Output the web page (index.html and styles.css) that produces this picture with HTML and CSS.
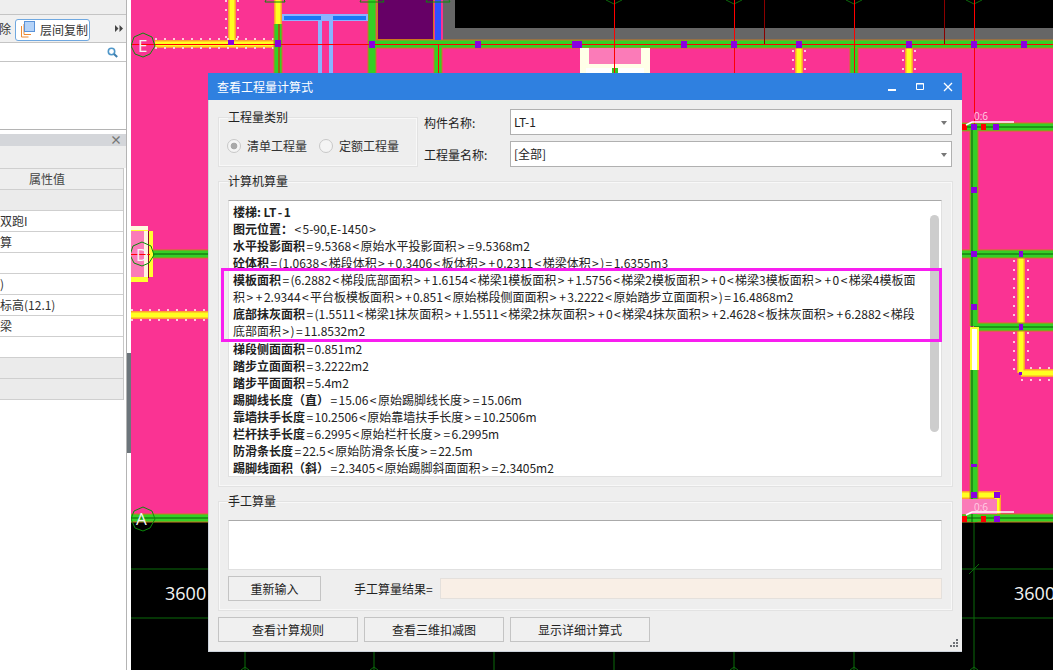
FILE: index.html
```html
<!DOCTYPE html>
<html lang="zh-CN">
<head>
    <meta charset="UTF-8">
    <meta name="viewport" content="width=device-width, initial-scale=1.0">
    <title>查看工程量计算式</title>
    <link rel="stylesheet" href="styles.css">
</head>
<body>
    <!-- 左侧面板 -->
    <aside class="side">
        <div class="side-top"></div>
        <div class="side-toolbar">
            <span class="tool-text">除</span>
            <span class="tool-btn">
                <svg class="tool-icon" width="15" height="17" viewBox="0 0 15 17">
                    <path d="M1.5 5v11h7M4 3v10.5h7" fill="none" stroke="#ee8a32" stroke-width="1"/>
                    <rect x="4.5" y="0.5" width="10" height="10" fill="#b5d3f8" stroke="#5b93d8"/>
                </svg>
                层间复制
            </span>
            <span class="tool-more">
                <svg width="8" height="7" viewBox="0 0 8 7"><path d="M0 0l3.5 3.5L0 7zM4.5 0L8 3.5 4.5 7z" fill="#444"/></svg>
            </span>
        </div>
        <div class="side-search">
            <svg width="11" height="11" viewBox="0 0 11 11">
                <circle cx="4.5" cy="4.5" r="3.2" fill="none" stroke="#4f97c9" stroke-width="1.6"/>
                <path d="M7 7l3.2 3" stroke="#3f7fae" stroke-width="2"/>
            </svg>
        </div>
        <div class="side-list"></div>
        <div class="panel-head"><span class="panel-close">×</span></div>
        <div class="panel-tools"></div>
        <div class="prop-table">
            <div class="prop-row prop-title">属性值</div>
            <div class="prop-row prop-gray"></div>
            <div class="prop-row">双跑I</div>
            <div class="prop-row">算</div>
            <div class="prop-row"></div>
            <div class="prop-row">)</div>
            <div class="prop-row">标高(12.1)</div>
            <div class="prop-row">梁</div>
            <div class="prop-row"></div>
            <div class="prop-row prop-gray"></div>
            <div class="prop-row prop-gray"></div>
        </div>
    </aside>

    <div class="splitter"><span class="splitter-handle"></span></div>

    <!-- 绘图区 -->
    <main class="canvas">
        <svg class="cad" width="922" height="670" viewBox="131 0 922 670">
            <rect x="131" y="0" width="922" height="670" fill="#fa3393"/>

            <!-- 顶部黑区 -->
            <rect x="443" y="0" width="610" height="40" fill="#666"/>
            <rect x="455" y="0" width="598" height="28" fill="#000"/>
            <rect x="377" y="0" width="57" height="40" fill="#c87a1a"/>
            <rect x="378" y="0" width="55" height="39" fill="#660066"/>

            <!-- 底部黑区 -->
            <rect x="131" y="522" width="922" height="148" fill="#000"/>
            <g class="axis-dark">
                <path d="M131 569H1053M131 618H1053"/>
                <path d="M245 522V670M374 522V670M494 522V670M614 522V670M734 522V670M854 522V670M974 522V670"/>
                <path d="M969 574l10-10"/>
                <path d="M241 670l4-3 4 3M370 670l4-3 4 3M730 670l4-3 4 3M850 670l4-3 4 3M970 670l4-3 4 3"/>
                <path d="M606 0l8 4 8-4M726 0l8 4 8-4M846 0l8 4 8-4M966 0l8 4 8-4"/>
            </g>

            <!-- 黄色梁 -->
            <g class="beam-y">
                <path d="M155 44H278"/><path d="M232 0V40"/><path d="M278 0V24"/>
                <path d="M799 48V73"/><path d="M909 48V73"/>
                <path d="M131 315H208"/>
                <path d="M1021 258V373"/><path d="M1021 373H1053"/>
                <path d="M962 495H1000"/><path d="M997 495V514"/>
            </g>
            <g class="beam-y-in">
                <path d="M155 44H278"/><path d="M232 0V40"/><path d="M278 0V24"/>
                <path d="M799 48V73"/><path d="M909 48V73"/>
                <path d="M131 315H208"/>
                <path d="M1021 258V373"/><path d="M1021 373H1053"/>
                <path d="M962 495H1000"/><path d="M997 495V514"/>
            </g>
            <g class="dots">
                <path d="M155 39H278M155 48H278M226 0V38M238 0V38"/>
                <path d="M793 50V73M805 50V73M903 50V73M915 50V73"/>
                <path d="M131 310H208M131 320H208"/>
                <path d="M1014 260V370M1028 260V368M1030 368H1053M1021 380H1053"/>
            </g>

            <!-- 绿色梁 -->
            <g class="beam-o">
                <path d="M370 44H1053"/><path d="M278 24V73"/><path d="M372 0V73"/><path d="M438 44V73"/>
                <path d="M854 48V73"/>
                <path d="M962 127H1053"/><path d="M974 127V326"/><path d="M974 370V522"/>
                <path d="M962 254H1053"/><path d="M974 327H1053"/>
                <path d="M150 254H208"/><path d="M131 518H1053"/>
            </g>
            <g class="beam-g">
                <path d="M370 44H1053"/><path d="M278 24V73"/><path d="M372 0V73"/><path d="M438 44V73"/>
                <path d="M854 48V73"/>
                <path d="M962 127H1053"/><path d="M974 127V326"/><path d="M974 370V522"/>
                <path d="M962 254H1053"/><path d="M974 327H1053"/>
                <path d="M150 254H208"/><path d="M131 518H1053"/>
            </g>
            <path d="M438 0V40" stroke="#2f50ff" stroke-width="6"/>
            <path d="M972 127V522M962 127H1053M962 254H1053M974 327H1053M150 254H208M131 518H1053" stroke="#0a5a0a" stroke-width="1"/>

            <!-- 白段 -->
            <rect x="970" y="327" width="9" height="43" fill="#ffff30"/>
            <rect x="972" y="329" width="5" height="41" fill="#fff"/>

            <!-- 蓝色T形 -->
            <rect x="282" y="14" width="86" height="7" fill="#8ab4ff"/>
            <rect x="284" y="16" width="82" height="4" fill="#1a78f5"/>
            <rect x="318" y="21" width="4" height="52" fill="#8ab4ff"/>
            <rect x="329" y="21" width="4" height="52" fill="#8ab4ff"/>
            <rect x="321" y="14" width="12" height="7" fill="#8ab4ff"/>

            <!-- 楼梯块 -->
            <rect x="580" y="48" width="70" height="25" fill="#ffffe8"/>
            <rect x="589" y="48" width="52" height="16" fill="#fb7bb8"/>
            <rect x="586" y="68" width="58" height="5" fill="#fff"/>
            <rect x="612" y="68" width="6" height="5" fill="#34c820"/>
            <rect x="131" y="226" width="17" height="56" fill="#ffff30"/>
            <rect x="131" y="226" width="17" height="4" fill="#fffbe0"/>
            <rect x="131" y="231" width="13" height="46" fill="#fb7bb8"/>
            <rect x="144" y="231" width="4" height="46" fill="#fff4e0"/>
            <rect x="148" y="231" width="1" height="47" fill="#8b0a2a"/>
            <rect x="149" y="231" width="4" height="46" fill="#ffff30"/>
            <rect x="962" y="499" width="35" height="15" fill="#fb7bb8"/>

            <!-- 红色轴线 -->
            <g class="axis-red">
                <path d="M131 44.5H1053"/>
                <path d="M614.5 0V73M734.5 0V73M854.5 0V73M974.5 0V127"/>
                <path d="M131 254.5H150M279 24V73M438.5 44V73"/>
            </g>
            <path d="M764.5 0V44M944.5 0V44" stroke="#8b0000" stroke-width="1"/>

            <!-- 柱点 -->
            <g class="node">
                <rect x="275" y="40" width="6" height="7"/><rect x="228" y="40" width="6" height="5"/>
                <rect x="369" y="41" width="6" height="7"/><rect x="475" y="41" width="6" height="7"/>
                <rect x="572" y="41" width="10" height="7"/><rect x="681" y="41" width="6" height="7"/>
                <rect x="731" y="41" width="6" height="7"/><rect x="796" y="41" width="6" height="7"/>
                <rect x="906" y="41" width="6" height="7"/><rect x="971" y="41" width="6" height="7"/>
                <rect x="1021" y="41" width="6" height="7"/>
                <rect x="971" y="124" width="6" height="6"/><rect x="993" y="124" width="6" height="6"/>
                <rect x="971" y="187" width="6" height="6"/><rect x="971" y="251" width="6" height="6"/>
                <rect x="1019" y="251" width="4" height="6"/><rect x="971" y="304" width="6" height="6"/>
                <rect x="1019" y="324" width="4" height="6"/><rect x="1019" y="372" width="3" height="3"/>
                <rect x="971" y="464" width="6" height="3"/>
                <rect x="971" y="492" width="6" height="6"/><rect x="994" y="492" width="6" height="6"/>
                <rect x="994" y="516" width="6" height="6"/>
            </g>
            <g class="node-red">
                <rect x="962" y="124" width="5" height="6"/><rect x="981" y="124" width="5" height="6"/>
                <rect x="962" y="516" width="5" height="6"/><rect x="981" y="516" width="5" height="6"/>
            </g>

            <!-- 轴号 -->
            <g class="bubble">
                <polygon points="143,33 152,37 155,46 150,54 143,57 135,54 131,46 134,37"/>
                <polygon points="142,242 151,246 154,255 149,263 142,266 134,263 130,255 133,246"/>
                <polygon points="143,507 152,511 155,519 150,528 143,531 135,528 131,519 134,511"/>
                <polygon points="274,-8 283,-4 285,2 265,2 268,-4"/>
                <polygon points="372,-8 381,-4 384,2 360,2 363,-4"/>
                <polygon points="438,-8 447,-4 450,2 426,2 429,-4"/>
            </g>
            <g class="cad-text">
                <text x="138" y="52" font-size="17">E</text>
                <text x="136" y="261" font-size="17">D</text>
                <text x="136" y="525" font-size="17">A</text>
                <text x="165" y="600" font-size="18">3600</text>
                <text x="1014" y="600" font-size="18">3600</text>
            </g>
            <g class="dim">
                <text x="974" y="120" font-size="10">0:6</text>
                <text x="974" y="511" font-size="10">0:6</text>
                <path d="M966 125l6-3H1014M966 515l6-3H1014"/>
            </g>
        </svg>
    </main>

    <!-- 对话框 -->
    <section class="dialog">
        <header class="dialog-title">
            <span>查看工程量计算式</span>
            <div class="win-btns">
                <svg width="10" height="10" viewBox="0 0 10 10"><rect x="1" y="7" width="8" height="2" fill="#fff"/></svg>
                <svg width="10" height="10" viewBox="0 0 10 10"><path d="M1.5 1.5h7v6h-7z M1 2h8" fill="none" stroke="#fff"/></svg>
                <svg width="10" height="10" viewBox="0 0 10 10"><path d="M1 1l8 8M9 1l-8 8" fill="none" stroke="#fff" stroke-width="1.3"/></svg>
            </div>
        </header>

        <div class="dialog-body">
            <div class="top-row">
                <fieldset class="group type-group">
                    <legend>工程量类别</legend>
                    <div class="radios">
                        <span class="radio checked">清单工程量</span>
                        <span class="radio">定额工程量</span>
                    </div>
                </fieldset>
                <div class="name-form">
                    <label>构件名称:</label>
                    <div class="select">LT-1</div>
                    <label>工程量名称:</label>
                    <div class="select">[全部]</div>
                </div>
            </div>

            <fieldset class="group calc-group">
                <legend>计算机算量</legend>
                <div class="calc-text">
                    <div class="line"><b>楼梯: LT<i>-</i>1</b></div>
                    <div class="line"><b>图元位置：</b><i>&lt;</i>5-90,E-1450<i>&gt;</i></div>
                    <div class="line"><b>水平投影面积</b><i>=</i>9.5368<i>&lt;</i>原始水平投影面积<i>&gt;</i><i>=</i>9.5368m2</div>
                    <div class="line"><b>砼体积</b><i>=</i>(1.0638<i>&lt;</i>梯段体积<i>&gt;</i><i>+</i>0.3406<i>&lt;</i>板体积<i>&gt;</i><i>+</i>0.2311<i>&lt;</i>梯梁体积<i>&gt;</i>)<i>=</i>1.6355m3</div>
                    <div class="line"><b>模板面积</b><i>=</i>(6.2882<i>&lt;</i>梯段底部面积<i>&gt;</i><i>+</i>1.6154<i>&lt;</i>梯梁1模板面积<i>&gt;</i><i>+</i>1.5756<i>&lt;</i>梯梁2模板面积<i>&gt;</i><i>+</i>0<i>&lt;</i>梯梁3模板面积<i>&gt;</i><i>+</i>0<i>&lt;</i>梯梁4模板面</div>
                    <div class="line">积<i>&gt;</i><i>+</i>2.9344<i>&lt;</i>平台板模板面积<i>&gt;</i><i>+</i>0.851<i>&lt;</i>原始梯段侧面面积<i>&gt;</i><i>+</i>3.2222<i>&lt;</i>原始踏步立面面积<i>&gt;</i>)<i>=</i>16.4868m2</div>
                    <div class="line"><b>底部抹灰面积</b><i>=</i>(1.5511<i>&lt;</i>梯梁1抹灰面积<i>&gt;</i><i>+</i>1.5511<i>&lt;</i>梯梁2抹灰面积<i>&gt;</i><i>+</i>0<i>&lt;</i>梯梁4抹灰面积<i>&gt;</i><i>+</i>2.4628<i>&lt;</i>板抹灰面积<i>&gt;</i><i>+</i>6.2882<i>&lt;</i>梯段</div>
                    <div class="line">底部面积<i>&gt;</i>)<i>=</i>11.8532m2</div>
                    <div class="line"><b>梯段侧面面积</b><i>=</i>0.851m2</div>
                    <div class="line"><b>踏步立面面积</b><i>=</i>3.2222m2</div>
                    <div class="line"><b>踏步平面面积</b><i>=</i>5.4m2</div>
                    <div class="line"><b>踢脚线长度（直）</b><i>=</i>15.06<i>&lt;</i>原始踢脚线长度<i>&gt;</i><i>=</i>15.06m</div>
                    <div class="line"><b>靠墙扶手长度</b><i>=</i>10.2506<i>&lt;</i>原始靠墙扶手长度<i>&gt;</i><i>=</i>10.2506m</div>
                    <div class="line"><b>栏杆扶手长度</b><i>=</i>6.2995<i>&lt;</i>原始栏杆长度<i>&gt;</i><i>=</i>6.2995m</div>
                    <div class="line"><b>防滑条长度</b><i>=</i>22.5<i>&lt;</i>原始防滑条长度<i>&gt;</i><i>=</i>22.5m</div>
                    <div class="line"><b>踢脚线面积（斜）</b><i>=</i>2.3405<i>&lt;</i>原始踢脚斜面面积<i>&gt;</i><i>=</i>2.3405m2</div>
                    <span class="scroll-thumb"></span>
                    <span class="highlight"></span>
                </div>
            </fieldset>

            <fieldset class="group manual-group">
                <legend>手工算量</legend>
                <div class="manual-input"></div>
                <div class="manual-row">
                    <button class="btn retry-btn">重新输入</button>
                    <span class="result-label">手工算量结果=</span>
                    <div class="result-field"></div>
                </div>
            </fieldset>

            <div class="footer">
                <button class="btn">查看计算规则</button>
                <button class="btn">查看三维扣减图</button>
                <button class="btn">显示详细计算式</button>
            </div>
        </div>

        <svg class="grip" width="9" height="9" viewBox="0 0 9 9">
            <path d="M7 0h2v2H7zM4 3h2v2H4zM7 3h2v2H7zM1 6h2v2H1zM4 6h2v2H4zM7 6h2v2H7z" fill="#6f7378"/>
        </svg>
    </section>
</body>
</html>
```

FILE: styles.css
```css
* {
    margin: 0;
    padding: 0;
    box-sizing: border-box;
}

body {
    font-family: "Noto Sans CJK SC", "Noto Sans", sans-serif;
    font-size: 12px;
    color: #222;
    width: 1053px;
    height: 670px;
    overflow: hidden;
    display: flex;
    background: #000;
}

/* left panel */
.side {
    width: 127px;
    flex: none;
    background: #fff;
    border-right: 1px solid #b4b4b4;
    display: flex;
    flex-direction: column;
    color: #333;
}

.side-top {
    height: 15px;
    background: #eee;
    border-bottom: 1px solid #c4c4c4;
}

.side-toolbar {
    height: 28px;
    background: #f0f0f0;
    border-bottom: 1px solid #c4c4c4;
    display: flex;
    align-items: center;
}

.tool-text {
    width: 16px;
    margin-left: -1px;
}

.tool-btn {
    width: 75px;
    height: 22px;
    margin-top: 2px;
    background: #fff;
    border: 1px solid #6fa8e0;
    border-radius: 3px;
    display: flex;
    align-items: center;
    gap: 5px;
    padding-left: 4px;
}

.tool-icon {
    flex: none;
}

.tool-more {
    margin-left: 25px;
    line-height: 0;
}

.side-search {
    height: 19px;
    border-bottom: 1px solid #c4c4c4;
    display: flex;
    justify-content: flex-end;
    align-items: center;
    padding-right: 8px;
}

.side-list {
    height: 68px;
    border-bottom: 1px solid #b4b4b4;
}

.panel-head {
    height: 12px;
    margin-top: 4px;
    background: #d4d6da;
    line-height: 12px;
    text-align: right;
    padding-right: 4px;
    font-weight: bold;
    color: #777;
}

.panel-tools {
    height: 22px;
    background: #eee;
}

.prop-table {
    width: 124px;
    border-right: 1px solid #c8c8c8;
}

.prop-row {
    height: 21px;
    border-top: 1px solid #cfcfcf;
    line-height: 20px;
    white-space: nowrap;
}

.prop-row:last-child {
    border-bottom: 1px solid #cfcfcf;
    height: 22px;
}

.prop-title {
    background: #eee;
    padding-left: 29px;
    color: #444;
}

.prop-gray {
    background: #ebebeb;
}

.splitter {
    width: 4px;
    flex: none;
    background: #fff;
    padding-top: 353px;
}

.splitter-handle {
    display: block;
    width: 4px;
    height: 100px;
    background: #6c757b;
}

/* cad canvas */
.canvas {
    flex: 1;
    height: 670px;
    overflow: hidden;
}

.cad {
    display: block;
}

.axis-dark path {
    fill: none;
    stroke: #0a6a0a;
    stroke-width: 1;
}

.beam-y path {
    fill: none;
    stroke: #ffa030;
    stroke-width: 8;
}

.beam-y-in path {
    fill: none;
    stroke: #ffff20;
    stroke-width: 5;
}

.dots path {
    fill: none;
    stroke: #ffc8dc;
    stroke-width: 2;
    stroke-dasharray: 2 7;
}

.beam-o path {
    fill: none;
    stroke: #c97a20;
    stroke-width: 9;
}

.beam-g path {
    fill: none;
    stroke: #35cf25;
    stroke-width: 7;
}

.axis-red path {
    fill: none;
    stroke: #ff0000;
    stroke-width: 1;
}

.node rect {
    fill: #8a00e0;
}

.node-red rect {
    fill: #ff0000;
}

.bubble polygon {
    fill: none;
    stroke: #0a8a0a;
    stroke-width: 1;
}

.cad-text text {
    fill: #f4f4f4;
    font-family: "Open Sans", sans-serif;
}

.dim text {
    fill: #ffd0e4;
    font-family: "Open Sans", sans-serif;
}

.dim path {
    fill: none;
    stroke: #fff;
    stroke-width: 1.5;
}

/* dialog */
.dialog {
    position: absolute;
    left: 208px;
    top: 73px;
    width: 754px;
    height: 579px;
    background: #eee;
    border-bottom: 1px solid #cdd3dc;
    border-left: 1px solid #cdd3dc;
    display: flex;
    flex-direction: column;
}

.dialog-title {
    height: 27px;
    flex: none;
    margin-left: -1px;
    background: #2f80e0;
    color: #fff;
    display: flex;
    align-items: center;
    justify-content: space-between;
    padding: 0 9px;
}

.win-btns {
    display: flex;
    gap: 18px;
    line-height: 0;
}

.dialog-body {
    flex: 1;
    display: flex;
    flex-direction: column;
    padding: 9px 9px 0 10px;
}

.top-row {
    display: flex;
    gap: 7px;
    height: 58px;
}

.group {
    border: 1px solid #f8f8f8;
    box-shadow: 0 0 0 1px #e2e2e2;
}

.group legend {
    line-height: 14px;
    padding-bottom: 2px;
}

.type-group {
    width: 198px;
    height: 56px;
    margin-top: 1px;
}

.type-group legend {
    margin-left: 8px;
}

.radios {
    display: flex;
    gap: 12px;
    padding: 10px 0 0 7px;
}

.radio {
    display: flex;
    align-items: center;
    gap: 6px;
    line-height: 20px;
    color: #333;
}

.radio::before {
    content: "";
    width: 12px;
    height: 12px;
    border-radius: 50%;
    border: 1px solid #c8c8c8;
    background: #f4f4f4;
}

.radio.checked::before {
    background: radial-gradient(circle, #a8a8a8 0, #a8a8a8 3px, #f4f4f4 3.7px);
}

.name-form {
    flex: 1;
    display: grid;
    grid-template-columns: 86px 442px;
    grid-auto-rows: 26px;
    row-gap: 6px;
    align-items: center;
}

.select {
    height: 26px;
    background: #fff;
    border: 1px solid #b0b0b0;
    line-height: 24px;
    padding-left: 3px;
    position: relative;
}

.select::after {
    content: "";
    position: absolute;
    right: 4px;
    top: 11px;
    border: 3px solid transparent;
    border-top: 4px solid #777;
    border-bottom: 0;
}

.calc-group {
    width: 733px;
    height: 312px;
    margin-top: 7px;
    padding: 20px 9px 0 8px;
}

.calc-group legend,
.manual-group legend {
    margin-bottom: -10px;
}

.calc-text {
    width: 714px;
    height: 277px;
    background: #fff;
    border: 1px solid #e0e0e0;
    border-top: 1px solid #aaa;
    padding: 2px 0 0 4px;
    position: relative;
}

.line {
    line-height: 17.06px;
    white-space: nowrap;
}

.line b {
    font-weight: bold;
}

/* operators sit in a wider cell in the original font */
.line i {
    font-style: normal;
    padding: 0 1.4px;
}

.scroll-thumb {
    position: absolute;
    left: 701px;
    top: 14px;
    width: 9px;
    height: 217px;
    border-radius: 5px;
    background: #cdcdcd;
}

.highlight {
    position: absolute;
    left: -8px;
    top: 67px;
    width: 721px;
    height: 74px;
    border: 3px solid #f81ef0;
}

.manual-group {
    width: 733px;
    height: 116px;
    margin-top: 8px;
    padding: 20px 9px 0 8px;
}

.manual-input {
    height: 50px;
    background: #fff;
    border: 1px solid #e0e0e0;
    border-top: 1px solid #aaa;
}

.manual-row {
    display: flex;
    align-items: center;
    margin-top: 6px;
}

.btn {
    font: inherit;
    color: #222;
    height: 25px;
    width: 140px;
    background: #f0f0f0;
    border: 1px solid #c4c4c4;
}

.retry-btn {
    width: 93px;
    flex: none;
}

.result-label {
    margin-left: 33px;
    width: 86px;
    flex: none;
}

.result-field {
    width: 502px;
    height: 21px;
    background: #f9efe6;
    border: 1px solid #e4e0dc;
}

.footer {
    display: flex;
    gap: 6px;
    margin-top: 7px;
    margin-left: -1px;
}

.grip {
    position: absolute;
    right: 4px;
    bottom: 3px;
}
```
